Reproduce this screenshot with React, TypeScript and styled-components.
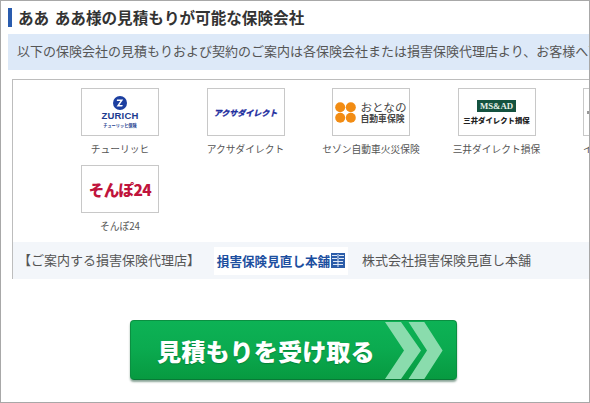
import React from "react";
import styled, { createGlobalStyle } from "styled-components";

const Global = createGlobalStyle`
  html, body { margin: 0; padding: 0; background: #fff; }
  body { width: 590px; height: 403px; overflow: hidden; font-family: "Noto Sans CJK JP", "Noto Sans", sans-serif; }
`;

const Frame = styled.div`
  box-sizing: border-box;
  width: 590px;
  height: 403px;
  overflow: hidden;
  border: 1px solid #a8a8a8;
  padding: 7px 0 0 7px;
  display: flex;
  flex-direction: column;
`;

const Heading = styled.h2`
  margin: 0;
  height: 19px;
  border-left: 4px solid #2a5cae;
  padding-left: 6px;
  font-size: 15.6px;
  line-height: 18px;
  font-weight: 700;
  word-spacing: 2px;
  color: #333;
  white-space: nowrap;
`;

const Notice = styled.div`
  margin-top: 7px;
  height: 36px;
  width: 590px;
  flex: none;
  background: #dde9f8;
  padding-left: 9px;
  box-sizing: border-box;
  font-size: 13px;
  line-height: 34px;
  color: #555;
  white-space: nowrap;
`;

const Card = styled.section`
  margin: 9px 0 0 4px;
  width: 600px;
  height: 200px;
  flex: none;
  box-sizing: border-box;
  border: 1px solid #bdbdbd;
  display: flex;
  flex-direction: column;
`;

const Companies = styled.div`
  flex: 1;
  padding: 8px 0 0 68px;
  display: grid;
  grid-template-columns: repeat(5, 78px);
  grid-auto-rows: 77px;
  column-gap: 47.5px;
  align-content: start;
`;

const Company = styled.div`
  display: flex;
  flex-direction: column;
  align-items: center;
`;

const LogoBox = styled.div`
  box-sizing: border-box;
  flex: none;
  width: 78px;
  height: 48px;
  border: 1px solid #c8c8c8;
  background: #fff;
  display: flex;
  flex-direction: column;
  align-items: center;
  justify-content: center;
  overflow: hidden;
`;

const CompanyName = styled.div`
  margin-top: 5px;
  font-size: 9.75px;
  line-height: 16px;
  color: #555;
  white-space: nowrap;
`;

const ZurichWord = styled.div`
  font-family: "Liberation Sans", sans-serif;
  font-size: 9.5px;
  line-height: 10px;
  font-weight: 700;
  letter-spacing: 0.2px;
  color: #1c3b8f;
  margin-top: 1px;
`;

const ZurichSub = styled.div`
  font-size: 4.2px;
  line-height: 7px;
  font-weight: 700;
  color: #1c3b8f;
  margin-top: 1px;
`;

const AxaWord = styled.div`
  font-size: 8px;
  font-weight: 900;
  font-style: italic;
  color: #1f2f9f;
  white-space: nowrap;
  -webkit-text-stroke: 0.2px #1f2f9f;
`;

const OtonaRow = styled.div`
  display: flex;
  align-items: center;
  gap: 4px;
`;

const OtonaText = styled.div`
  display: flex;
  flex-direction: column;
  align-items: flex-start;
  color: #444;
`;

const OtonaTop = styled.div`
  font-size: 11.6px;
  line-height: 13px;
  white-space: nowrap;
`;

const OtonaBottom = styled.div`
  font-size: 8.8px;
  line-height: 10px;
  font-weight: 700;
  white-space: nowrap;
`;

const MsBadge = styled.div`
  width: 39px;
  height: 12px;
  background: #14523f;
  color: #e6f0e8;
  font-family: "Liberation Serif", serif;
  font-size: 8.8px;
  line-height: 12px;
  font-weight: 700;
  text-align: center;
  white-space: nowrap;
`;

const MsWord = styled.div`
  margin-top: 3px;
  font-size: 7.4px;
  line-height: 9px;
  font-weight: 900;
  color: #222;
  white-space: nowrap;
`;

const SonpoWord = styled.div`
  font-size: 15.5px;
  font-weight: 900;
  color: #c0143c;
  white-space: nowrap;
  letter-spacing: -0.6px;
`;

const CutOffMark = styled.div`
  align-self: flex-start;
  margin-left: 3px;
  width: 3px;
  height: 3px;
  background: #999;
`;

const AgentBar = styled.div`
  height: 37px;
  flex: none;
  background: #f3f6fa;
  display: flex;
  align-items: center;
  padding-left: 5px;
  font-size: 13px;
  color: #555;
  white-space: nowrap;
`;

const AgentLabel = styled.span`
  width: 196px;
  flex: none;
  line-height: 35px;
  height: 37px;
`;

const AgentLogo = styled.div`
  width: 134px;
  height: 28px;
  flex: none;
  background: #fff;
  display: flex;
  align-items: center;
  justify-content: center;
  gap: 1px;
  color: #1d4f9f;
  font-size: 12.6px;
  font-weight: 700;
`;

const AgentName = styled.span`
  margin-left: 14px;
  line-height: 35px;
  height: 37px;
`;

const ButtonRow = styled.div`
  margin-top: 41px;
  padding-left: 122px;
`;

const CtaButton = styled.a`
  width: 327px;
  height: 60px;
  box-sizing: border-box;
  display: flex;
  align-items: center;
  justify-content: space-between;
  padding: 0 13px 0 26px;
  border-radius: 4px;
  border: 1px solid #0b8f41;
  border-bottom-color: #087a36;
  background: linear-gradient(#0db255 0%, #0bab50 45%, #079a40 100%);
  box-shadow: 0 2px 2px rgba(0, 60, 30, 0.45);
  color: #fff;
  font-size: 24.2px;
  font-weight: 900;
  white-space: nowrap;
  text-shadow: 0 1px 1px rgba(0, 80, 30, 0.4);
`;

const ZurichMark = () => (
  <svg width="14" height="14" viewBox="0 0 14 14">
    <circle cx="7" cy="7" r="7" fill="#1c3fa0" />
    <path d="M4 3.6h6.2L6.4 9h3.4L9.2 10.5H3.6L7.4 5H3.8z" fill="#fff" />
  </svg>
);

const OtonaDots = () => (
  <svg width="21" height="21" viewBox="0 0 21 21">
    <circle cx="5.2" cy="5.2" r="5" fill="#f28c13" />
    <circle cx="15.8" cy="5.2" r="5" fill="#f28c13" />
    <circle cx="5.2" cy="15.8" r="5" fill="#f28c13" />
    <circle cx="15.8" cy="15.8" r="5" fill="#f28c13" />
  </svg>
);

const AgentMark = () => (
  <svg width="14" height="15" viewBox="0 0 14 15">
    <rect width="14" height="15" fill="#2b5ca8" />
    <path d="M1 2h5v1H1zM8 2h5v1H8zM1 5h5v1H1zM8 5h5v1H8zM2 8h10v1H2zM6.5 1h1v13h-1zM2 11h10v1H2z" fill="#dfe8f5" />
  </svg>
);

const Chevrons = () => (
  <svg width="58" height="57" viewBox="0 0 58 57">
    <path d="M0 0H16L36 28.5 16 57H0L19 28.5z" fill="#8adcad" />
    <path d="M23.5 0H39.3L57.6 28.5 39.3 57H23.5L42 28.5z" fill="#8adcad" />
  </svg>
);

export default function App() {
  return (
    <>
      <Global />
      <Frame>
        <Heading>ああ ああ様の見積もりが可能な保険会社</Heading>
        <Notice>以下の保険会社の見積もりおよび契約のご案内は各保険会社または損害保険代理店より、お客様へ直接ご連絡いたします。</Notice>
        <Card>
          <Companies>
            <Company>
              <LogoBox>
                <ZurichMark />
                <ZurichWord>ZURICH</ZurichWord>
                <ZurichSub>チューリッヒ保険</ZurichSub>
              </LogoBox>
              <CompanyName>チューリッヒ</CompanyName>
            </Company>
            <Company>
              <LogoBox>
                <AxaWord>アクサダイレクト</AxaWord>
              </LogoBox>
              <CompanyName>アクサダイレクト</CompanyName>
            </Company>
            <Company>
              <LogoBox>
                <OtonaRow>
                  <OtonaDots />
                  <OtonaText>
                    <OtonaTop>おとなの</OtonaTop>
                    <OtonaBottom>自動車保険</OtonaBottom>
                  </OtonaText>
                </OtonaRow>
              </LogoBox>
              <CompanyName>セゾン自動車火災保険</CompanyName>
            </Company>
            <Company>
              <LogoBox>
                <MsBadge>MS&amp;AD</MsBadge>
                <MsWord>三井ダイレクト損保</MsWord>
              </LogoBox>
              <CompanyName>三井ダイレクト損保</CompanyName>
            </Company>
            <Company>
              <LogoBox>
                <CutOffMark />
              </LogoBox>
              <CompanyName>イーデザイン損保</CompanyName>
            </Company>
            <Company>
              <LogoBox>
                <SonpoWord>そんぽ24</SonpoWord>
              </LogoBox>
              <CompanyName>そんぽ24</CompanyName>
            </Company>
          </Companies>
          <AgentBar>
            <AgentLabel>【ご案内する損害保険代理店】</AgentLabel>
            <AgentLogo>
              損害保険見直し本舗
              <AgentMark />
            </AgentLogo>
            <AgentName>株式会社損害保険見直し本舗</AgentName>
          </AgentBar>
        </Card>
        <ButtonRow>
          <CtaButton>
            見積もりを受け取る
            <Chevrons />
          </CtaButton>
        </ButtonRow>
      </Frame>
    </>
  );
}
